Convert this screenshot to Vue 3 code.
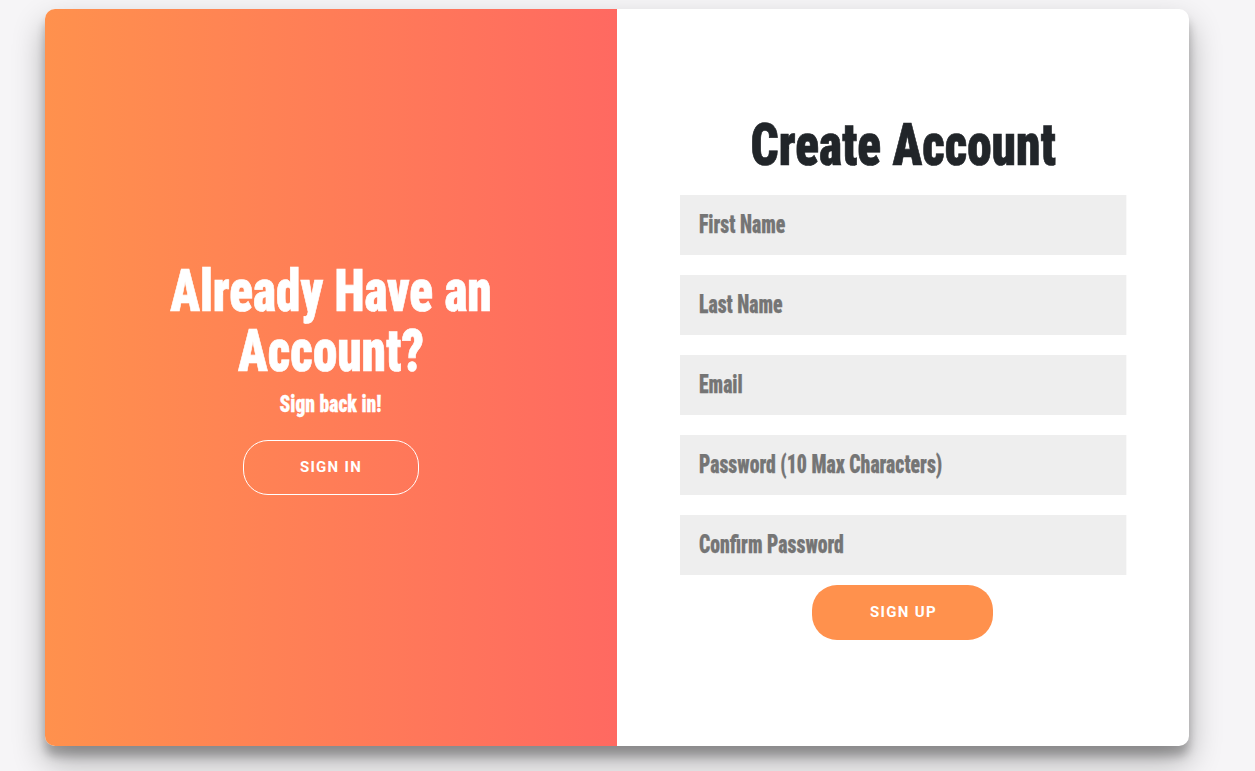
<script setup>
const fields = [
  { label: 'First Name', type: 'text' },
  { label: 'Last Name', type: 'text' },
  { label: 'Email', type: 'email' },
  { label: 'Password (10 Max Characters)', type: 'password' },
  { label: 'Confirm Password', type: 'password' },
]
</script>

<template>
  <main class="page">
    <section class="card">
      <div class="panel-left">
        <h2 class="left-title">Already Have an Account?</h2>
        <p class="left-sub">Sign back in!</p>
        <button class="btn btn-ghost" type="button">SIGN IN</button>
      </div>
      <form class="panel-right" @submit.prevent>
        <h1 class="right-title">Create Account</h1>
        <input
          v-for="f in fields"
          :key="f.label"
          class="field"
          :type="f.type"
          :placeholder="f.label"
        />
        <button class="btn btn-solid" type="submit">SIGN UP</button>
      </form>
    </section>
  </main>
</template>

<style>
html, body { margin: 0; background: #f6f5f7; }
</style>

<style scoped>
.page {
  height: 771px;
  box-sizing: border-box;
  padding: 9px 66px 0 45px;
  overflow: hidden;
}
.card {
  display: grid;
  grid-template-columns: 572px 572px;
  height: 737px;
  border-radius: 10px;
  overflow: hidden;
  box-shadow: 0 16px 32px rgba(0, 0, 0, 0.3), 0 10px 10px rgba(0, 0, 0, 0.24);
  background: #fff;
}
.panel-left {
  background: linear-gradient(to right, #ff914d, #ff6961);
  color: #fff;
  display: flex;
  flex-direction: column;
  align-items: center;
  justify-content: center;
  text-align: center;
}
.left-title {
  width: 400px;
  margin: 1px 0 0;
  font-family: "Roboto", sans-serif;
  font-stretch: 75%;
  font-weight: 900;
  font-size: 60px;
  line-height: 60px;
  -webkit-text-stroke: 0.7px currentColor;
  transform: scaleX(0.82);
}
.left-sub {
  margin: 11px 0 24px;
  font-family: "Roboto", sans-serif;
  font-stretch: 75%;
  font-weight: 900;
  font-size: 24px;
  line-height: 24px;
  -webkit-text-stroke: 0.3px currentColor;
  transform: scaleX(0.815);
}
.panel-right {
  display: flex;
  flex-direction: column;
  align-items: center;
  justify-content: center;
  padding: 0 63px;
}
.right-title {
  margin: 0 0 20px;
  color: #212529;
  font-family: "Roboto", sans-serif;
  font-stretch: 75%;
  font-weight: 900;
  font-size: 60px;
  line-height: 60px;
  -webkit-text-stroke: 0.7px currentColor;
  transform: scaleX(0.82);
  white-space: nowrap;
}
.field {
  box-sizing: border-box;
  align-self: flex-start;
  width: 565px;
  height: 60px;
  flex: none;
  margin-bottom: 20px;
  padding: 0 24px 2px;
  border: 0;
  border-radius: 0;
  outline: 0;
  background: #eee;
  font-family: "Roboto", sans-serif;
  font-stretch: 75%;
  font-weight: 900;
  font-size: 25px;
  -webkit-text-stroke: 0.25px #757575;
  transform: scaleX(0.79);
  transform-origin: left center;
}
.field::placeholder { color: #757575; opacity: 1; }
.field:last-of-type { margin-bottom: 10px; }
.btn {
  padding: 0 0 2px;
  font-family: "Roboto", sans-serif;
  font-stretch: 100%;
  font-weight: 700;
  font-size: 15px;
  letter-spacing: 1.3px;
  color: #fff;
  border-radius: 25px;
  cursor: pointer;
}
.btn-ghost {
  width: 176px;
  height: 55px;
  background: transparent;
  border: 1px solid #fff;
}
.btn-solid {
  width: 181px;
  height: 55px;
  margin-right: 1px;
  padding-left: 2px;
  background: #ff914d;
  border: 0;
}
</style>
